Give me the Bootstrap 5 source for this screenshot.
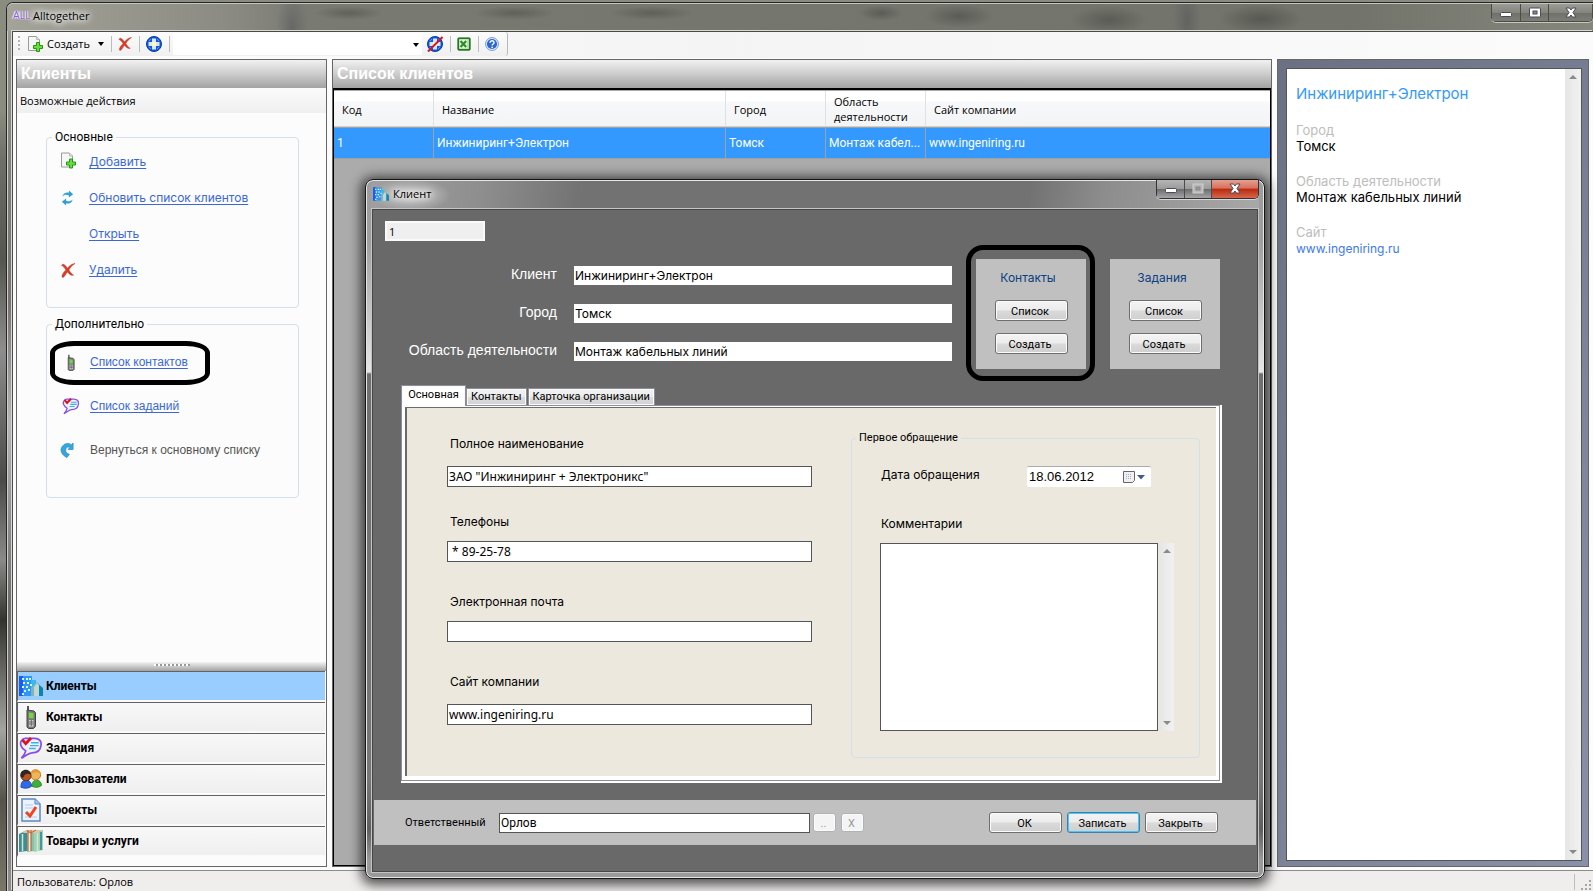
<!DOCTYPE html>
<html lang="ru">
<head>
<meta charset="utf-8">
<meta name="viewport" content="width=device-width, initial-scale=1">
<title>Alltogether</title>
<link rel="stylesheet" href="https://cdn.jsdelivr.net/npm/bootstrap@5.3.0/dist/css/bootstrap.min.css">
<style>
:root{--ui:"Open Sans","Noto Sans",sans-serif;--form:Inter,"Liberation Sans",sans-serif;--tight:Roboto,"Liberation Sans",sans-serif;--arial:"Liberation Sans",Arial,sans-serif}
body{font:11px/16px var(--ui);color:#000;background:linear-gradient(#8b8c80 0 110px,#6e6f68 160px,#55564f 260px,#8d8d8d 350px,#4a4a48 480px,#8a8a88 560px,#33332f 620px,#a3a3a0 730px,#55544a 800px,#7a776a)}
.shell{min-height:100vh;padding:2px 0 0 6px}
.mainwin{border:1px solid #26262a;border-width:1px 0 0 1px;border-radius:7px 0 0 0;background:linear-gradient(#a5a59d,#8f8f88 60px,#7c7c76 200px,#77736f 300px,#b5b5b5 420px,#6f6c6c 600px,#8e8b88);box-shadow:inset 1px 1px 0 #cfcfc9}
.main-title{height:28px;padding-left:6px;border-radius:6px 0 0 0;border-top:1px solid #c6c6c0;
background:
radial-gradient(ellipse 34px 7px at 342px 9px,#50514a99,transparent),
radial-gradient(ellipse 40px 7px at 508px 9px,#50514a99,transparent),
radial-gradient(ellipse 42px 7px at 645px 9px,#50514a99,transparent),
radial-gradient(ellipse 22px 8px at 874px 9px,#4a4b4699,transparent),
radial-gradient(ellipse 34px 12px at 952px 12px,#4a4b4699,transparent),
radial-gradient(ellipse 38px 14px at 1102px 16px,#4a4b4699,transparent),
radial-gradient(ellipse 42px 15px at 1254px 15px,#4a4b46aa,transparent),
radial-gradient(ellipse 16px 40px at 285px 24px,#50515577,transparent),
radial-gradient(ellipse 14px 40px at 1180px 16px,#50515577,transparent),
linear-gradient(90deg,#a3a399,#8b8b83 220px,#797a72 300px,#75766e 700px,#72736a 85%,#85867c)}
.glow{text-shadow:0 0 6px #fff,0 0 8px #fff,0 0 10px #fff}
.logo-txt{font:10px/12px var(--arial);color:#8d5be8;width:16px;text-shadow:0 0 1px #fff,1px 0 1px #fff,-1px 0 1px #fff}
.client{margin-left:5px;border-left:1px solid #4c4c4c;border-top:1px solid #4a4a46;background:#fcfcfc;min-height:calc(100vh - 31px);box-shadow:-1px -1px 0 #d9d9d4}
.winbtns{border:1px solid #4b4c48;border-top:0;border-radius:0 0 5px 5px;box-shadow:0 1px 0 #c8c8c2,inset 0 0 0 1px #a9aaa4;height:18px}
.winbtns button{border:0;padding:0;background:linear-gradient(#9b9c95,#84857d 50%,#6f7069 51%,#7d7e77);width:28px}
.winbtns button+button{border-left:1px solid #4b4c48}
.winbtns button:last-child{width:44px;border-radius:0 0 4px 0}
.winbtns svg{display:block;margin:auto}
.toolbar{height:26px;background:linear-gradient(90deg,#fff,#f6f6f6 480px,#f4f4f4 700px,#fbfbfb)}
.tools{height:24px;width:495px;padding-left:5px;background:linear-gradient(#fcfcfc,#f0f0f0);border-radius:0 3px 3px 0;border-right:1px solid #b9b9b9}
.tools svg,.act svg{flex:none}
.tools .tb{border:0;background:none;padding:0;display:flex;align-items:center;height:22px;color:#000}
.grip{width:2px;height:16px;margin-right:7px;background:repeating-linear-gradient(#b5b5b5 0 2px,transparent 2px 4px)}
.vsep{width:1px;height:16px;background:#bdbdbd}
.tools .vsep{margin:0 6px 0 7px}
.caret{width:0;height:0;border:3px solid transparent;border-top:4px solid #000;border-bottom:0}
.finder{flex:none;width:249px;height:22px;border:0;background:#fff;appearance:none;font-size:11px;border-radius:0;outline:0}
.findwrap{margin:0 5px 0 -3px}
.findwrap::after{content:"";position:absolute;right:3px;top:10px;border:3px solid transparent;border-top:4px solid #000;border-bottom:0;pointer-events:none}
.workspace{margin:1px 4px 3px 3px;gap:5px;height:calc(100vh - 83px)}
.panel-head{height:28px;flex:none;font:bold 16px/27px var(--arial);color:#fff;padding-left:4px;background:linear-gradient(#f1f1f1,#d0d0d0 45%,#a3a3a3);margin:0}
.side{width:311px;flex:none;border:1px solid #666}
.sub{height:25px;flex:none;padding:5px 3px 4px;background:linear-gradient(#fbfbfb,#efefef)}
.box{border:1px solid #d3dfe9;border-radius:4px;margin:0;padding:0;min-width:0}
.box>legend{float:none;width:auto;margin:0 0 0 5px;padding:0 3px;font:12px/14px var(--tight)}
.acts{width:253px;margin-left:29px;padding-left:13px}
.acts>legend{margin-left:-8px}
.act{display:flex;align-items:center}
.act i{width:30px;flex:none;line-height:0}
.act a{color:#3a68d8;text-decoration:underline;text-underline-offset:2px}
.acts.one{margin-top:17px;height:178px;font:12px/16px var(--form)}
.acts.one .act{height:36px}
.acts.one i{width:29px}
.acts.two{margin-top:9px;height:181px;font:12px/16px var(--arial);padding-top:9px}
.acts.two .act{height:44px}
.ring{position:absolute;border:5px solid #000;pointer-events:none}
.ring-link{left:-10px;top:1px;width:160px;height:44px;border-radius:24px/12px}
.split{height:9px;background:linear-gradient(#f3f3f3,#a2a2a2);display:flex;justify-content:center}
.split::before{content:"";width:36px;height:2px;margin-top:2px;background:repeating-linear-gradient(90deg,#fff 0 2px,#999 2px 4px)}
.side-nav a{display:flex;align-items:center;gap:3px;height:31px;border:solid #626262;border-width:1px 0 0 1px;border-bottom:2px solid #fbfbfb;padding-left:1px;margin-right:1px;background:linear-gradient(#f8f8f8,#efefef);color:#000;text-decoration:none;font-weight:700;font-size:12px}
.side-nav{font-family:var(--tight);padding-bottom:9px}
.side-nav a.active{background:#9cf}
.mid{flex:1;min-width:0;border:1px solid #666}
.gridbox{flex:1;border:1px solid #000;border-top-width:2px;background:#ababab}
.cl{table-layout:fixed;width:100%;margin:0;border-collapse:separate;border-spacing:0;border-top:1px solid #aaa}
.cl th{font-weight:400;height:36px;padding:1px 8px 0;font-size:11px;line-height:15px;vertical-align:middle;background:linear-gradient(#fff 0 10px,#f7f8fa 11px,#f3f4f6);border-right:1px solid #dfe1e4;border-bottom:1px solid #cfcfcf}
.cl td{height:32px;padding:0 3px;background:#39f;color:#fff;font:12px/16px var(--tight);vertical-align:middle;border:solid #a0a0a0;border-width:1px 1px 1px 0;white-space:nowrap}
.cl th:last-child,.cl td:last-child{border-right:0}
.info{width:312px;flex:none;border:1px solid #666;background:linear-gradient(120deg,#6b7083,#8891a7);padding:8px 6px 5px 8px}
.info-in{height:100%;border:1px solid #555;background:#fff;padding-left:9px}
.info-tx{font:13px/17px var(--form);padding-top:15px}
.info-tx h2{font:15px/20px var(--form);color:#39f;margin:0 0 18px}
.info-tx dl,.info-tx dd{margin:0}
.info-tx dt{font-weight:400;color:#bdbdbd;line-height:16px}
.info-tx dd{margin-bottom:18px}
.info-tx a{color:#3a78f0;text-decoration:none;font-size:12px}
.sb{width:16px;flex:none;background:linear-gradient(90deg,#e6e6e6,#f1f1f1);padding:6px 4px}
.sb::before,.sb::after{content:"";border:4px solid transparent}
.sb::before{border-top:0;border-bottom:4px solid #8a8a8a}
.sb::after{border-bottom:0;border-top:4px solid #8a8a8a}
.status{height:21px;border-top:1px solid #8c8c8c;background:#f0eded;padding:2px 0 0 4px}
/* dialog window */
.dlg{position:absolute;z-index:5;left:365px;top:179px;width:900px;border:1px solid #151515;border-radius:8px;padding:1px 5px 5px;background:linear-gradient(#9c9c9c,#9e9e9e 60px,#e6e6e6 192px,#707070 194px,#777 600px,#5f5f5f 650px,#9a9a9a 680px);box-shadow:inset 0 0 0 1px #e6e6e6,0 2px 12px 4px #000000a8}
.dlg-title{height:27px;padding-left:2px;border-radius:6px 6px 0 0;background:radial-gradient(ellipse 40px 16px at 40px 14px,#cfcfcf,transparent),linear-gradient(100deg,#a0a0a0,#8e8e8e 110px,#727272 210px,#727272 74%,#8c8c8c 82%,#a8a8a8)}
.dlg-title .glow{padding-top:5px}
.dlg .winbtns{margin-top:-1px;height:19px;border-color:#333;box-shadow:0 1px 0 #d8d8d8,inset 0 0 0 1px #bbb}
.dlg .winbtns button{background:linear-gradient(#b5b5b5,#9a9a9a 50%,#6c6c6e 51%,#a5a5a7);width:27px}
.dlg .winbtns button:last-child{width:47px;background:linear-gradient(#e5a091,#d9705c 45%,#b72c11 51%,#d8664c)}
.dlg-body{border:1px solid #c4c4c4;box-shadow:inset 0 0 0 1px #474747;background:#696969;padding:1px 1px 27px;color:#000}
.dlg input,.dlg textarea{border-radius:0;outline:0;color:#000;min-width:0}
.code{margin:11px 0 0 12px;width:100px;height:20px;border:2px solid #fafafa;background:#efefef;padding:0 2px;font:11px/16px var(--ui);display:block}
.hdr{padding-right:37px}
.hdr-form{flex:1;padding-top:25px;display:grid;grid-template-columns:184px 1fr;column-gap:17px;row-gap:19px;align-items:center;align-content:start;margin-right:24px}
.hdr-form label{color:#fff;text-align:right;font:14px/19px var(--arial);margin:-1px 0 1px}
.hdr-form input{height:19px;border:0;background:#fff;padding:0 1px;font:12px/19px var(--form);width:100%}
.hdr-form label{height:17px;line-height:17px}
.tile{position:relative;width:110px;height:110px;margin-top:18px;background:silver;padding-top:11px}
.tile h3{font:12px/16px var(--form);color:#0a4080;margin:0 6px 14px 0}
.tile .wbtn+.wbtn{margin-top:12px}
.tile .ring{inset:-14px -9px -12px -10px;border-radius:17px}
.wbtn{display:block;width:73px;height:21px;border:1px solid #6e6e6e;border-radius:3px;background:linear-gradient(#f4f4f4,#ececec 48%,#dadada 52%,#cfcfcf);box-shadow:inset 0 0 0 1px #fbfbfb;font:11px/17px var(--tight);padding:1px 2px 0 0;color:#000}
.wbtn.def{border-color:#3c7fb1;box-shadow:inset 0 0 0 1px #48c8f5}
.wbtn.mini{width:23px;height:19px;border-color:#adb2b5;background:#f4f4f4;color:#9a9a9a}
.tabs{margin:16px 0 0 28px;gap:1px;height:20px;align-items:flex-end}
.tabs button{border:1px solid #8c8e98;border-bottom:0;height:17px;padding:0 3px;font:11px/16px var(--tight);background:linear-gradient(#f2f2f2,#ececec 50%,#dcdcdc 51%,#d2d2d2);box-shadow:inset 0 0 0 1px #fafafa;color:#000}
.tabs button+button{padding:0 4px}
.tabs .active{height:21px;width:65px;margin:0 -1px -1px 0;background:#fff;padding:0 2px 2px;z-index:1}
.tabpage{margin:0 37px 0 28px;border:1px solid #8c8e98;background:#fff;padding:1px 3px 4px;box-shadow:1px 1px 0 1px #fff}
.sheet{border:2px solid #6b6b6b;border-width:1px 0 0 2px;background:#ece8dd;height:369px;padding:0 16px 0 40px;outline:0;font:12px/16px var(--form)}
.fields{flex:1;padding-top:28px;margin-right:39px}
.fields label{display:block;padding-left:3px;margin-bottom:11px}
.fields input{display:block;width:100%;height:21px;border:1px solid #555;background:#fff;padding:0 1px;font:12px/19px "Noto Sans",sans-serif}
.fields div{margin-bottom:32px}
.fields .wide label{margin-bottom:14px}
.fields .wide{margin-bottom:27px}
.appeal{width:349px;margin-top:23px;height:327px;border-color:#d3dfe9;padding-left:29px}
.appeal>legend{margin-left:-25px;font:11px/14px var(--tight)}
.appeal-date{margin-top:21px}
.appeal-date label{width:146px;padding-bottom:3px}
.appeal .memo-label{display:block;margin:29px 0 11px}
.date{width:124px;height:21px;background:#fff;border-top:1px solid #a8abb0;border-radius:2px;display:flex;align-items:center;padding:0 5px 0 2px}
.date input{border:0;background:none;padding:0;width:94px;font:13px/18px var(--arial)}
.date button{border:0;background:none;padding:0;display:flex;align-items:center;gap:2px;color:#3f5d8c}
.memo{width:278px;height:188px;border:1px solid #555;background:#fff;resize:none;margin-left:-1px}
.appeal .sb{width:15px;margin-left:1px}
.foot{height:45px;margin:19px 1px 0;padding:0 38px 0 31px;gap:5px;background:silver}
.foot input{width:311px;height:20px;border:1px solid #555;padding:0 1px;font:12px/16px var(--tight);margin-right:-2px}
.foot label{width:89px;font:11px/16px var(--tight)}
.muted-txt{color:#555}
</style>
</head>
<body>
<svg width="0" height="0" class="position-absolute" aria-hidden="true">
<symbol id="i-add" viewBox="0 0 16 16"><path d="M1.500.500h8l3 3v11h-11z" fill="#f6f6f6" stroke="#9a9a9a"/><path d="M9.500.500v3h3" fill="#e4e4e4" stroke="#bbb"/><path d="M9.500 6.500h3v3h3v3h-3v3h-3v-3h-3v-3h3z" fill="#6fd83f" stroke="#1d9a10"/></symbol>
<symbol id="i-del" viewBox="0 0 16 16"><path d="M1 2.500C3 0 4.500 2 7.500 5.500 10 2.500 12 1 15.500.500 12 3 10.500 4.500 9 7.500c1.500 2.500 3 4.500 5 5.500-3 .5-4.500-1-6.500-3.500C5.500 11.500 4.500 15 2.500 15.500.500 15 2 11 5.800 7.400 4 5 3 3.500 1 2.500z" fill="#dc3b27" stroke="#b9301f" stroke-width=".5"/></symbol>
<symbol id="i-plus" viewBox="0 0 16 16"><circle cx="8" cy="8" r="7.500" fill="#1557d8" stroke="#0a3ba8"/><path d="M3 5a6 6 0 0 1 2-2M11 3a6 6 0 0 1 2 2M3 11a6 6 0 0 0 2 2M11 13a6 6 0 0 0 2-2" stroke="#5a9cff" fill="none"/><path d="M6 2.500h4V6h3.500v4H10v3.500H6V10H2.500V6H6z" fill="#d4e8ff"/><path d="M6 6h4v4H6z" fill="#fff8b8"/></symbol>
<symbol id="i-refresh" viewBox="0 0 16 16"><path d="M2.500 6.500C3.500 2.500 7 1.500 9.500 2.300V0L14 4 9.500 7.500V5.200C7 4.200 4.500 4.500 2.500 6.500z" fill="#2f9fd8"/><path d="M13.500 9.500c-1 4-4.500 5-7 4.200V16L2 12l4.500-3.500v2.300c2.500 1 5 .7 7-1.300z" fill="#2f9fd8"/></symbol>
<symbol id="i-back" viewBox="0 0 16 16"><path d="M14 .5V7.500H8.500l2-2.300C7.500 4 4.300 6.500 7.300 11.500L10 12.500 7.500 16C1.500 13.500-1 7.500 3 3.500 5.500.5 9.500.3 12 2.300z" fill="#35a7dd" stroke="#1c7db8" stroke-width=".6"/></symbol>
<symbol id="i-phone" viewBox="0 0 24 24"><path d="M8 1h2v5H8z" fill="#555"/><path d="M8 5l7 1 1.500 2v13.500L14.500 23.500H9.500L8 22z" fill="#777" stroke="#444"/><path d="M10 7.500l4.500.5v5.500l-4.500-.5z" fill="#6fd943"/><path d="M10 15h4.500v6.500H10z" fill="#d2d2d2"/><path d="M10 17h4.500M10 19h4.500M12.300 15v6" stroke="#666"/></symbol>
<symbol id="i-task" viewBox="0 0 24 24"><path d="M6 1.500h10c5 0 7 3 6.500 7-.5 5-4 8-9.500 8-4 0-7 4-11 5.500C4 20 6 17 6.500 14.500 1.500 11.500 0 7 2 4c1-1.800 2-2.500 4-2.500z" fill="#f0f0ff" stroke="#8450e8" stroke-width="1.800"/><path d="M12 6h8M11 9h9M10 12h7" stroke="#3bb2d8" stroke-width="1.500"/><path d="M3 3l3.500 4L12 1" stroke="#d8161c" stroke-width="3" fill="none"/></symbol>
<symbol id="i-city" viewBox="0 0 24 22"><path d="M0 1h13v20H0z" fill="#2f96f8"/><path d="M0 1h4v20H0z" fill="#1d5cf0"/><path d="M12 5h5v14h-5z" fill="#36b8f0"/><path d="M3 3h2v2H3zM7 3h2v2H7zM10 3h2v2h-2zM4 7h2v2H4zM8 7h2v2H8zM3 11h2v2H3zM7 11h2v2H7zM5 15h2v2H5zM9 14h2v2H9zM11 9h2v2h-2zM3 18h2v2H3z" fill="#d9f7d0"/><path d="M12 21V13l6-6 6 6v8z" fill="#7bb4c4"/><path d="M15 21v-9l3-4 2 3v10z" fill="#c5d5d0"/><path d="M20 10l4 3v8h-4z" fill="#0b84b0"/></symbol>
<symbol id="i-users" viewBox="0 0 24 24"><path d="M13 20c0-4 2-7 5-7s5.500 3 5.500 6c-3 2.500-7 2.500-10.500 1z" fill="#3fae3a" stroke="#2a8828"/><circle cx="17" cy="7.500" r="5.500" fill="#f0b45c" stroke="#b87722"/><path d="M12 7c0-7 10-7 11 0-3-3-8-3-11 0z" fill="#e79a2c"/><path d="M1 21c0-5 2-8 5.500-8s6 3 6 7c-3 2.500-8 2.500-11.500 1z" fill="#2f6be8" stroke="#1d48b0"/><circle cx="6.500" cy="8.500" r="5.500" fill="#b5551f" stroke="#5b2a10"/><path d="M.500 9c-1-9 11-9 11.500-2-3-1-5-1-7 .500-1 3-2.500 4-4.500 1.500z" fill="#33251f"/></symbol>
<symbol id="i-doc" viewBox="0 0 24 24"><path d="M3 1h13l5 5v17H3z" fill="#eaf3ff" stroke="#5d86c4" stroke-width="1.500"/><path d="M16 1v5h5" fill="#a8c8f0" stroke="#5d86c4"/><path d="M6 7h8M6 10h10M6 19h12" stroke="#b5cdea"/><path d="M7 14l4 4 6-9" fill="none" stroke="#f0441c" stroke-width="3"/></symbol>
<symbol id="i-goods" viewBox="0 0 24 24"><path d="M0 5l8-4v21l-8 1z" fill="#3d8d98"/><path d="M8 2l7-1v21l-7 1z" fill="#7fc4b4"/><path d="M15 2l9-1v20l-9 2z" fill="#a5d0b0"/><path d="M3 3l6-2h13l-3 3H5z" fill="#d8c8a0"/><path d="M9 1v21M12 1v21" stroke="#d8582c" stroke-width="1.100"/><path d="M10.500 4v18" stroke="#f4ecc8" stroke-width="1.500"/><path d="M8 2l4 2 5-3" stroke="#e0562c" fill="none"/><path d="M18.500 4v18M3.500 5v17" stroke="#cfe8c8" stroke-width="1.500"/><path d="M22 3v18" stroke="#3d98a8" stroke-width="2"/></symbol>
<symbol id="i-xls" viewBox="0 0 16 16"><rect x="1" y="1" width="14" height="14" rx="1" fill="#2b8a2b" stroke="#155c15"/><path d="M2.500 2.500h11v11h-11z" fill="#eaf7e2"/><path d="M4 4.500l6.500 7M10.500 4.500l-6.500 7" stroke="#239123" stroke-width="2.500"/><path d="M12.500 3v10" stroke="#8ed08a"/></symbol>
<symbol id="i-help" viewBox="0 0 16 16"><circle cx="8" cy="8" r="7.400" fill="#dce9fa" stroke="#6c94cc"/><circle cx="8" cy="8" r="5.800" fill="#2d66cc"/><path d="M5.800 6.500C5.800 3.500 10.500 3.700 10.300 6.400 10.200 8 8.200 8 8.200 9.600" fill="none" stroke="#fff" stroke-width="1.600"/><circle cx="8.200" cy="11.800" r="1" fill="#fff"/></symbol>
<symbol id="i-min" viewBox="0 0 14 12"><rect x="1.500" y="5.500" width="11" height="4" rx="1" fill="#fff" stroke="#4a4a58"/></symbol>
<symbol id="i-max" viewBox="0 0 14 12"><rect x="1.500" y="1" width="11" height="9" rx="1" fill="#fff" stroke="#4a4a58"/><rect x="5" y="4" width="4" height="3" fill="#888" stroke="#4a4a58"/></symbol>
<symbol id="i-maxoff" viewBox="0 0 14 12"><rect x="2" y="1" width="10" height="9" fill="#b8b8b8" stroke="#d0d0d0"/><rect x="5" y="4" width="4" height="3" fill="#999" stroke="#888"/></symbol>
<symbol id="i-close" viewBox="0 0 14 12"><path d="M2 1h3.500L7 3l1.500-2H12L9 5.500 12 10H8.500L7 8l-1.500 2H2l3-4.500z" fill="#fff" stroke="#4a4a58"/></symbol>
</svg>

<div class="shell position-relative">
<div class="mainwin">
  <header class="main-title d-flex align-items-start">
    <div class="d-flex align-items-center gap-1 pt-1 glow"><span class="logo-txt">ALL</span><span>Alltogether</span></div>
    <div class="winbtns d-flex ms-auto">
      <button aria-label="Свернуть"><svg width="14" height="12"><use href="#i-min"/></svg></button>
      <button aria-label="Развернуть"><svg width="14" height="12"><use href="#i-max"/></svg></button>
      <button aria-label="Закрыть окно"><svg width="14" height="12"><use href="#i-close"/></svg></button>
    </div>
  </header>
  <div class="client d-flex flex-column">
    <div class="toolbar">
      <div class="tools d-flex align-items-center">
        <span class="grip"></span>
        <button class="tb"><svg width="16" height="16" class="me-1"><use href="#i-add"/></svg>Создать<span class="caret ms-2"></span></button>
        <span class="vsep"></span>
        <button class="tb" aria-label="Удалить запись"><svg width="14" height="14"><use href="#i-del"/></svg></button>
        <span class="vsep"></span>
        <button class="tb" aria-label="Установить фильтр"><svg width="16" height="16"><use href="#i-plus"/></svg></button>
        <span class="vsep"></span>
        <span class="findwrap position-relative d-flex"><select class="finder" aria-label="Фильтр"><option></option></select></span>
        <button class="tb" aria-label="Снять фильтр"><svg width="16" height="16" viewBox="0 0 16 16"><use href="#i-plus" width="16" height="16"/><path d="M1 15.500L15.500 1" stroke="#d81420" stroke-width="2"/></svg></button>
        <span class="vsep"></span>
        <button class="tb" aria-label="Экспорт в Excel"><svg width="14" height="14"><use href="#i-xls"/></svg></button>
        <span class="vsep"></span>
        <button class="tb" aria-label="Справка"><svg width="14" height="14"><use href="#i-help"/></svg></button>
      </div>
    </div>
    <main class="workspace d-flex">
      <aside class="side d-flex flex-column">
        <h1 class="panel-head">Клиенты</h1>
        <div class="sub">Возможные действия</div>
        <fieldset class="box acts one"><legend>Основные</legend>
          <div class="act"><i><svg width="16" height="17" class="mb-1"><use href="#i-add"/></svg></i><a href="#">Добавить</a></div>
          <div class="act"><i><svg width="15" height="16"><use href="#i-refresh"/></svg></i><a href="#">Обновить список клиентов</a></div>
          <div class="act"><i></i><a href="#">Открыть</a></div>
          <div class="act"><i><svg width="16" height="15"><use href="#i-del"/></svg></i><a href="#">Удалить</a></div>
        </fieldset>
        <fieldset class="box acts two"><legend>Дополнительно</legend>
          <div class="act position-relative"><i><svg width="22" height="17"><use href="#i-phone"/></svg></i><a href="#">Список контактов</a><span class="ring ring-link"></span></div>
          <div class="act"><i><svg width="22" height="17"><use href="#i-task"/></svg></i><a href="#">Список заданий</a></div>
          <div class="act"><i><svg width="15" height="16"><use href="#i-back"/></svg></i><span class="muted-txt">Вернуться к основному списку</span></div>
        </fieldset>
        <nav class="side-nav mt-auto">
          <div class="split"></div>
          <a href="#" class="active"><svg width="24" height="22"><use href="#i-city"/></svg>Клиенты</a>
          <a href="#"><svg width="24" height="24"><use href="#i-phone"/></svg>Контакты</a>
          <a href="#"><svg width="24" height="23"><use href="#i-task"/></svg>Задания</a>
          <a href="#"><svg width="24" height="22"><use href="#i-users"/></svg>Пользователи</a>
          <a href="#"><svg width="24" height="24"><use href="#i-doc"/></svg>Проекты</a>
          <a href="#"><svg width="24" height="24"><use href="#i-goods"/></svg>Товары и услуги</a>
        </nav>
      </aside>
      <section class="mid d-flex flex-column">
        <h2 class="panel-head">Список клиентов</h2>
        <div class="gridbox">
          <table class="cl">
            <colgroup><col style="width:100px"><col style="width:292px"><col style="width:100px"><col style="width:100px"><col></colgroup>
            <thead><tr><th>Код</th><th>Название</th><th>Город</th><th>Область деятельности</th><th>Сайт компании</th></tr></thead>
            <tbody><tr><td>1</td><td>Инжиниринг+Электрон</td><td>Томск</td><td>Монтаж кабел...</td><td>www.ingeniring.ru</td></tr></tbody>
          </table>
        </div>
      </section>
      <aside class="info">
        <div class="info-in d-flex justify-content-between">
          <div class="info-tx"><h2>Инжиниринг+Электрон</h2>
            <dl><dt>Город</dt><dd>Томск</dd><dt>Область деятельности</dt><dd>Монтаж кабельных линий</dd><dt>Сайт</dt><dd><a href="#">www.ingeniring.ru</a></dd></dl>
          </div>
          <div class="sb d-flex flex-column justify-content-between"></div>
        </div>
      </aside>
    </main>
    <footer class="status d-flex align-items-center">Пользователь: Орлов
      <span class="ms-auto vsep me-1"></span>
      <svg width="14" height="16" class="align-self-end" aria-hidden="true"><path d="M10 5h2v2h-2zM6 9h2v2H6zM10 9h2v2h-2zM2 13h2v2H2zM6 13h2v2H6zM10 13h2v2h-2z" fill="#a5a5a5"/></svg>
    </footer>
  </div>
</div>

<section class="dlg" role="dialog" aria-label="Клиент">
  <div class="dlg-title d-flex align-items-start">
    <div class="d-flex align-items-center gap-1 glow"><svg width="16" height="16"><use href="#i-city"/></svg><span>Клиент</span></div>
    <div class="winbtns d-flex ms-auto">
      <button aria-label="Свернуть"><svg width="14" height="12"><use href="#i-min"/></svg></button>
      <button aria-label="Развернуть" disabled><svg width="14" height="12"><use href="#i-maxoff"/></svg></button>
      <button aria-label="Закрыть окно"><svg width="14" height="12"><use href="#i-close"/></svg></button>
    </div>
  </div>
  <div class="dlg-body">
    <input class="code" value="1" readonly aria-label="Код">
    <div class="hdr d-flex">
      <div class="hdr-form">
        <label for="f1">Клиент</label><input id="f1" value="Инжиниринг+Электрон">
        <label for="f2">Город</label><input id="f2" value="Томск">
        <label for="f3">Область деятельности</label><input id="f3" value="Монтаж кабельных линий">
      </div>
      <div class="tile d-flex flex-column align-items-center me-4"><h3>Контакты</h3><button class="wbtn">Список</button><button class="wbtn">Создать</button><span class="ring"></span></div>
      <div class="tile d-flex flex-column align-items-center"><h3>Задания</h3><button class="wbtn">Список</button><button class="wbtn">Создать</button></div>
    </div>
    <div class="tabs d-flex" role="tablist"><button class="active" role="tab">Основная</button><button role="tab">Контакты</button><button role="tab">Карточка организации</button></div>
    <div class="tabpage"><div class="sheet d-flex align-items-start">
      <div class="fields">
        <div class="wide"><label for="g1">Полное наименование</label><input id="g1" value='ЗАО "Инжиниринг + Электроникс"'></div>
        <div><label for="g2">Телефоны</label><input id="g2" value=" * 89-25-78"></div>
        <div><label for="g3">Электронная почта</label><input id="g3"></div>
        <div class="wide"><label for="g4">Сайт компании</label><input id="g4" value="www.ingeniring.ru"></div>
      </div>
      <fieldset class="box appeal"><legend>Первое обращение</legend>
        <div class="appeal-date d-flex align-items-center"><label for="d1">Дата обращения</label>
          <div class="date"><input id="d1" value="18.06.2012"><button aria-label="Календарь"><svg width="12" height="14" viewBox="0 0 12 14"><path d="M.500 1.500h11v9l-2 2h-9z" fill="#f0f0f0" stroke="#6d6262"/><path d="M3 4.500h6M3 6.500h6M3 8.500h6" stroke="#9bb0c8" stroke-dasharray="1 1"/></svg><svg width="8" height="5"><path d="M0 0h8L4 4.500z" fill="#3f5d8c"/></svg></button></div></div>
        <label for="m1" class="memo-label">Комментарии</label>
        <div class="d-flex"><textarea id="m1" class="memo"></textarea><div class="sb d-flex flex-column justify-content-between"></div></div>
      </fieldset>
    </div></div>
    <div class="foot d-flex align-items-center">
      <label for="r1">Ответственный</label><input id="r1" value="Орлов">
      <button class="wbtn mini" disabled>..</button><button class="wbtn mini" disabled>X</button>
      <button class="wbtn ms-auto">ОК</button><button class="wbtn def">Записать</button><button class="wbtn">Закрыть</button>
    </div>
  </div>
</section>
</div>
<script src="https://cdn.jsdelivr.net/npm/bootstrap@5.3.0/dist/js/bootstrap.bundle.min.js"></script>
</body>
</html>
